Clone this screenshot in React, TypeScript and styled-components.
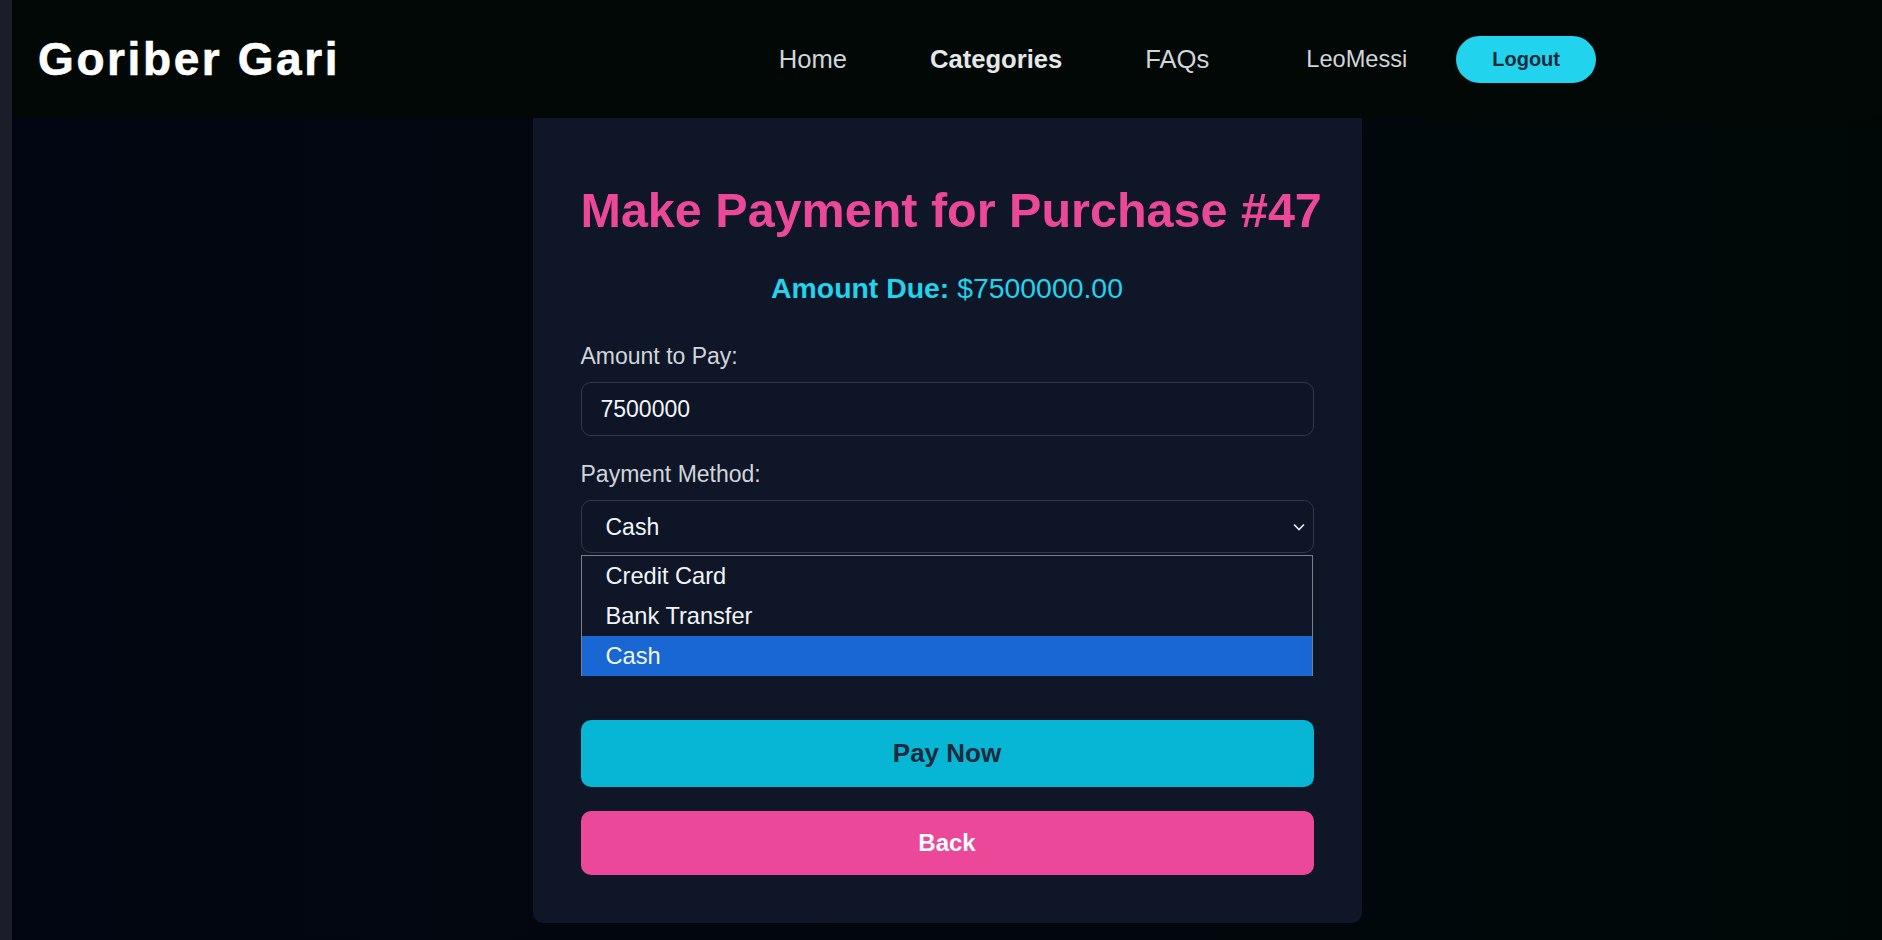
import React, { useState } from "react";
import styled, { createGlobalStyle } from "styled-components";

const GlobalStyle = createGlobalStyle`
  html, body {
    margin: 0;
    padding: 0;
    background: #01050b;
  }
  * {
    box-sizing: border-box;
  }
  body {
    font-family: "Liberation Sans", Arial, sans-serif;
  }
`;

const Page = styled.div`
  display: flex;
  min-height: 100vh;
`;

const SideStrip = styled.div`
  width: 12px;
  flex-shrink: 0;
  background: #1b1e29;
`;

const Main = styled.div`
  flex: 1;
  display: flex;
  flex-direction: column;
  background: linear-gradient(to right, #020612 0%, #01070c 60%, #000807 100%);
`;

const Navbar = styled.nav`
  height: 118px;
  display: flex;
  align-items: center;
  padding: 0 286px 0 26px;
  background: #010805;
`;

const Logo = styled.div`
  color: #ffffff;
  font-size: 46px;
  font-weight: 700;
  letter-spacing: 2.6px;
  -webkit-text-stroke: 0.6px #ffffff;
`;

const NavLinks = styled.ul`
  display: flex;
  align-items: center;
  gap: 83px;
  margin: 0 0 0 auto;
  padding: 0;
  list-style: none;
`;

const NavLink = styled.li<{ $active?: boolean }>`
  font-size: 25.6px;
  color: ${(p) => (p.$active ? "#e5e7eb" : "#d1d5db")};
  font-weight: ${(p) => (p.$active ? 700 : 400)};
  cursor: pointer;
`;

const UserArea = styled.div`
  display: flex;
  align-items: center;
  gap: 49px;
  margin-left: 97px;
`;

const UserName = styled.span`
  font-size: 23.6px;
  color: #d1d5db;
`;

const LogoutButton = styled.button`
  height: 47px;
  padding: 0 36px;
  border: none;
  border-radius: 24px;
  background: #22d3ee;
  color: #1e293b;
  font-family: inherit;
  font-size: 20px;
  font-weight: 700;
  cursor: pointer;
`;

const Content = styled.main`
  flex: 1;
  display: flex;
  justify-content: center;
  align-items: flex-start;
`;

const Card = styled.section`
  width: 829px;
  padding: 65px 48px 48px;
  background: #0e1628;
  border-radius: 0 0 10px 10px;
  display: flex;
  flex-direction: column;
`;

const Title = styled.h1`
  margin: 0;
  text-align: center;
  white-space: nowrap;
  color: #ec4899;
  font-size: 48.5px;
  line-height: 55px;
  font-weight: 700;
`;

const AmountDue = styled.p`
  margin: 34px 0 0;
  text-align: center;
  color: #22d3ee;
  font-size: 28.4px;
  line-height: 33px;

  strong {
    font-weight: 700;
  }
`;

const Field = styled.div<{ $top: number }>`
  display: flex;
  flex-direction: column;
  gap: 12px;
  margin-top: ${(p) => p.$top}px;
`;

const Label = styled.label`
  color: #d1d5db;
  font-size: 23px;
  line-height: 27px;
`;

const TextInput = styled.input`
  height: 54px;
  width: 100%;
  padding: 0 19px;
  border: 1px solid #303a4c;
  border-radius: 10px;
  background: #0d1526;
  color: #f1f5f9;
  font-family: inherit;
  font-size: 23px;
  outline: none;
`;

const SelectWrap = styled.div`
  position: relative;
`;

const Select = styled.select`
  appearance: none;
  height: 53px;
  width: 100%;
  padding: 0 24px;
  border: 1px solid #303a4c;
  border-radius: 10px;
  background: #0d1526;
  color: #f1f5f9;
  font-family: inherit;
  font-size: 23px;
  outline: none;
`;

const Chevron = styled.svg`
  position: absolute;
  right: 9px;
  top: 50%;
  transform: translateY(-50%);
  pointer-events: none;
`;

const ListBox = styled.ul`
  position: absolute;
  top: calc(100% + 2px);
  left: 0;
  right: 1px;
  margin: 0;
  padding: 0;
  list-style: none;
  border: 1px solid #7b7f86;
  border-bottom: none;
  background: #0e1628;
  z-index: 5;
`;

const Option = styled.li<{ $selected?: boolean }>`
  height: 40px;
  display: flex;
  align-items: center;
  padding-left: 24px;
  font-size: 23.6px;
  color: #f1f5f9;
  background: ${(p) => (p.$selected ? "#1967d2" : "transparent")};
`;

const ActionButton = styled.button<{ $variant: "pay" | "back" }>`
  width: 100%;
  height: ${(p) => (p.$variant === "pay" ? 67 : 64)}px;
  margin-top: ${(p) => (p.$variant === "pay" ? 167 : 24)}px;
  border: none;
  border-radius: 10px;
  background: ${(p) => (p.$variant === "pay" ? "#06b6d4" : "#ec4899")};
  color: ${(p) => (p.$variant === "pay" ? "#1e293b" : "#ffffff")};
  font-family: inherit;
  font-size: ${(p) => (p.$variant === "pay" ? 26 : 24)}px;
  font-weight: 700;
  cursor: pointer;
`;

const methods = ["Credit Card", "Bank Transfer", "Cash"];

export default function App() {
  const [amount, setAmount] = useState("7500000");
  const [method, setMethod] = useState("Cash");

  return (
    <>
      <GlobalStyle />
      <Page>
        <SideStrip />
        <Main>
          <Navbar>
            <Logo>Goriber Gari</Logo>
            <NavLinks>
              <NavLink>Home</NavLink>
              <NavLink $active>Categories</NavLink>
              <NavLink>FAQs</NavLink>
            </NavLinks>
            <UserArea>
              <UserName>LeoMessi</UserName>
              <LogoutButton>Logout</LogoutButton>
            </UserArea>
          </Navbar>
          <Content>
            <Card>
              <Title>Make Payment for Purchase #47</Title>
              <AmountDue>
                <strong>Amount Due:</strong> $7500000.00
              </AmountDue>
              <Field $top={38}>
                <Label>Amount to Pay:</Label>
                <TextInput value={amount} onChange={(e) => setAmount(e.target.value)} />
              </Field>
              <Field $top={25}>
                <Label>Payment Method:</Label>
                <SelectWrap>
                  <Select value={method} onChange={(e) => setMethod(e.target.value)}>
                    {methods.map((m) => (
                      <option key={m}>{m}</option>
                    ))}
                  </Select>
                  <Chevron width="12" height="8" viewBox="0 0 12 8">
                    <path d="M1 1.5 L6 6.5 L11 1.5" fill="none" stroke="#e5e7eb" strokeWidth="1.7" />
                  </Chevron>
                  <ListBox>
                    {methods.map((m) => (
                      <Option key={m} $selected={m === method}>
                        {m}
                      </Option>
                    ))}
                  </ListBox>
                </SelectWrap>
              </Field>
              <ActionButton $variant="pay">Pay Now</ActionButton>
              <ActionButton $variant="back">Back</ActionButton>
            </Card>
          </Content>
        </Main>
      </Page>
    </>
  );
}
